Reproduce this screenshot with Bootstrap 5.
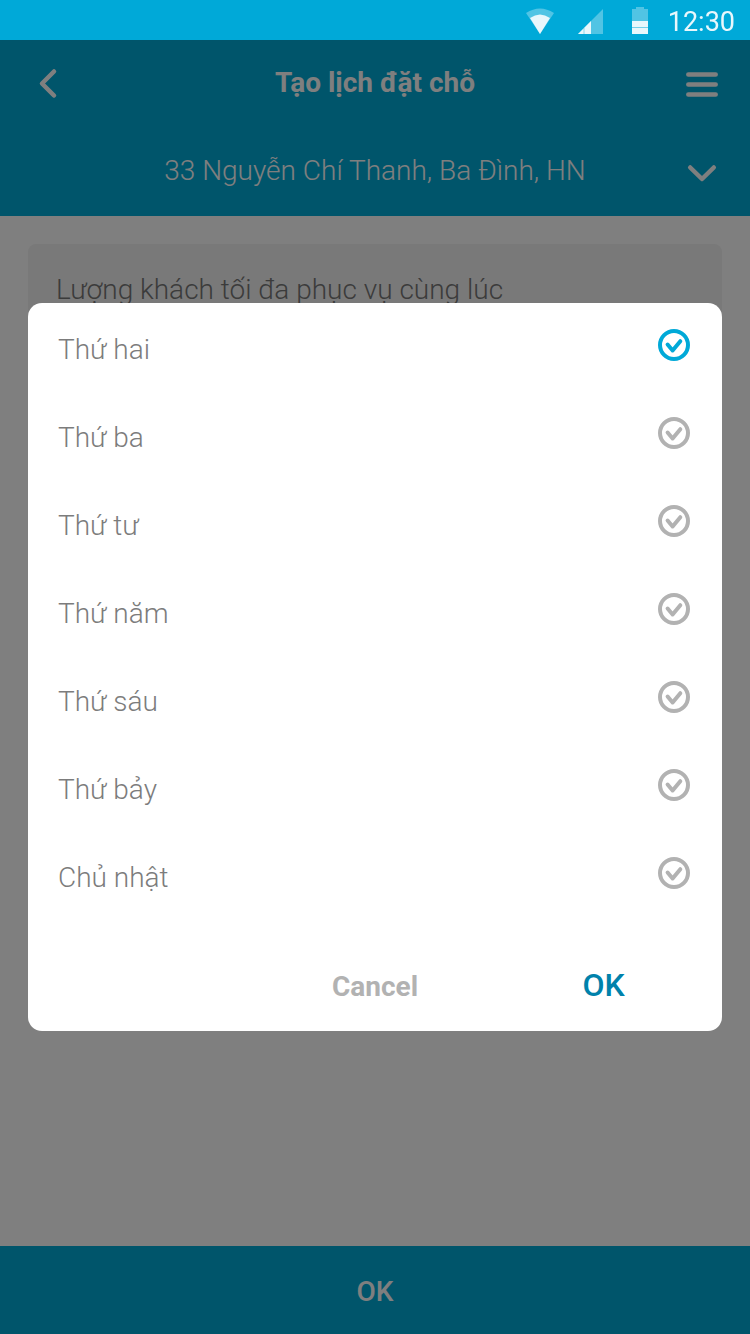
<!DOCTYPE html>
<html lang="vi">
<head>
<meta charset="utf-8">
<meta name="viewport" content="width=device-width, initial-scale=1">
<title>Tạo lịch đặt chỗ</title>
<link href="https://cdn.jsdelivr.net/npm/bootstrap@5.3.0/dist/css/bootstrap.min.css" rel="stylesheet">
<style>
body{font-family:Roboto,"Noto Sans",sans-serif;background:#fff;font-size:28px;line-height:40px}
svg{display:block;flex:none}
.status-bar{background:#00a9d8;height:40px;z-index:1060;font-size:27px;padding:4px 15px 0 0;color:#e8f7fc}
.status-icons{margin:-2px 19px 0 0;gap:24px}
.app-bar,.confirm-bar{background:#00aad6;color:#fff}
.title-row{height:86px}
.place-row{height:90px;font-weight:300}
.app-bar .btn{color:#fff;padding:8px;border:0}
.app-bar .title-row,.app-bar .place-row{padding:0 24px}
.center-text{flex:1;text-align:center;font-size:28px;line-height:40px}
.field-panel{background:#f2f2f2;color:#777;border-radius:8px;font-weight:300;min-height:120px;margin:28px;padding:26px 28px}
.confirm-bar,.confirm-bar:hover{height:88px;font-weight:500;font-size:28px;line-height:40px;padding:4px 0 0;background:#00aad6;color:#fff}
.scrim{background:rgba(0,0,0,.5);z-index:1050;padding:0 28px}
.day-sheet{background:#fff;border-radius:14px}
.day-row{height:88px;padding:26px 32px 0 30px;font-weight:300;line-height:42px;color:#7c7c7c;cursor:pointer}
.day-row input{width:32px;height:32px;margin:0;opacity:0;position:absolute;inset:0}
.tick{color:#b2b2b2}
input:checked + .tick{color:#00a9d8}
.act-row{height:112px;padding:46px 4px 0}
.act-row .btn{border:0;padding:0;font-weight:700;font-size:28px;line-height:40px;color:#b2b2b2}
.act-row .act-ok{font-weight:500;font-size:32px;color:#0082ab}
</style>
</head>
<body class="d-flex flex-column min-vh-100">
<div class="status-bar position-relative d-flex align-items-center justify-content-end">
  <div class="status-icons d-flex" aria-hidden="true">
    <svg width="28" height="28" viewBox="0 0 28 28" fill="currentColor"><path opacity=".35" d="M0 6Q14-3 28 6L14 27Z"/><path d="M4 11Q14 4 24 11L14 27Z"/></svg>
    <svg width="25" height="28" viewBox="0 0 25 28" fill="currentColor"><path opacity=".35" d="M0 27L25 2V27Z"/><path d="M0 27L13 14V27Z"/><path d="M6 21V27" stroke="#00a9d8" stroke-opacity=".4"/></svg>
    <svg class="ms-1" width="18" height="28" viewBox="0 0 18 28" fill="currentColor"><path opacity=".35" d="M1 2H5V0H13V2H17V14H1Z"/><path d="M1 14H17V27H1Z"/><path d="M1 20.5H17" stroke="#00a9d8" stroke-opacity=".5"/></svg>
  </div>
  <time>12:30</time>
</div>
<header class="app-bar">
  <div class="title-row d-flex align-items-center">
    <button class="btn" type="button" aria-label="Quay lại"><svg width="32" height="32" viewBox="0 0 32 32" fill="none" stroke="currentColor" stroke-width="4.5" stroke-linecap="round" stroke-linejoin="round"><path d="M22 4.5L10 16.5L22 28.5"/></svg></button>
    <h1 class="center-text fw-bold m-0">Tạo lịch đặt chỗ</h1>
    <button class="btn" type="button" aria-label="Menu"><svg width="32" height="32" viewBox="0 0 32 32" fill="none" stroke="currentColor" stroke-width="4.5" stroke-linecap="round"><path d="M2.300 7.500H29.700M2.300 17.500H29.700M2.300 27.500H29.700"/></svg></button>
  </div>
  <div class="place-row d-flex align-items-center">
    <div class="center-text ps-5">33 Nguyễn Chí Thanh, Ba Đình, HN</div>
    <button class="btn" type="button" aria-label="Chọn địa điểm"><svg width="32" height="32" viewBox="0 0 32 32" fill="none" stroke="currentColor" stroke-width="4.5" stroke-linecap="round" stroke-linejoin="round"><path d="M4.200 12.500L16 24L27.800 12.500"/></svg></button>
  </div>
</header>
<main class="flex-grow-1"><div class="field-panel">Lượng khách tối đa phục vụ cùng lúc</div></main>
<button class="confirm-bar btn rounded-0 border-0" type="button">OK</button>

<div class="scrim position-fixed top-0 start-0 w-100 h-100 d-flex align-items-center">
  <form class="day-sheet w-100" role="dialog" aria-label="Chọn ngày">
    <svg width="0" height="0" class="position-absolute"><symbol id="tick" viewBox="0 0 32 32"><g fill="none" stroke="currentColor" stroke-width="4"><circle cx="16" cy="16" r="14"/><path stroke-linecap="round" stroke-linejoin="round" d="M9.600 15.500L14.600 21.500L22.300 12.200"/></g></symbol></svg>
    <label class="day-row d-flex align-items-start justify-content-between">Thứ hai<span class="position-relative"><input type="checkbox" checked><svg class="tick" width="32" height="32"><use href="#tick"/></svg></span></label>
    <label class="day-row d-flex align-items-start justify-content-between">Thứ ba<span class="position-relative"><input type="checkbox"><svg class="tick" width="32" height="32"><use href="#tick"/></svg></span></label>
    <label class="day-row d-flex align-items-start justify-content-between">Thứ tư<span class="position-relative"><input type="checkbox"><svg class="tick" width="32" height="32"><use href="#tick"/></svg></span></label>
    <label class="day-row d-flex align-items-start justify-content-between">Thứ năm<span class="position-relative"><input type="checkbox"><svg class="tick" width="32" height="32"><use href="#tick"/></svg></span></label>
    <label class="day-row d-flex align-items-start justify-content-between">Thứ sáu<span class="position-relative"><input type="checkbox"><svg class="tick" width="32" height="32"><use href="#tick"/></svg></span></label>
    <label class="day-row d-flex align-items-start justify-content-between">Thứ bảy<span class="position-relative"><input type="checkbox"><svg class="tick" width="32" height="32"><use href="#tick"/></svg></span></label>
    <label class="day-row d-flex align-items-start justify-content-between">Chủ nhật<span class="position-relative"><input type="checkbox"><svg class="tick" width="32" height="32"><use href="#tick"/></svg></span></label>
    <div class="act-row d-flex align-items-baseline">
      <button class="btn col-4 offset-4" type="button">Cancel</button>
      <button class="btn act-ok col-4" type="button">OK</button>
    </div>
  </form>
</div>
<script src="https://cdn.jsdelivr.net/npm/bootstrap@5.3.0/dist/js/bootstrap.bundle.min.js"></script>
</body>
</html>
